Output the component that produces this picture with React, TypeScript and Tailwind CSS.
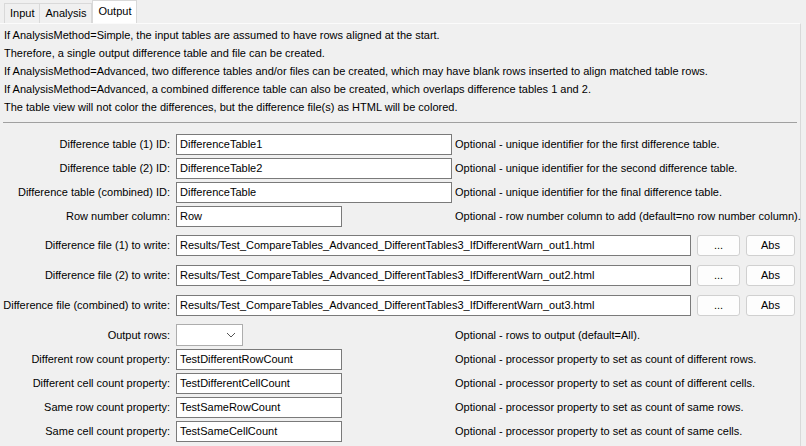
import React from "react";

const F = { fontFamily: '"Segoe UI","Liberation Sans",Arial,sans-serif' };

function Input({ v, w }: { v: string; w: string }) {
  return (
    <div className={`${w} shrink-0 h-[21px] bg-white border border-[#7a7a7a] flex items-center px-[3px] text-[11px] text-black whitespace-nowrap overflow-hidden`}>{v}</div>
  );
}
function Btn({ t, w }: { t: string; w: string }) {
  return (
    <div className={`${w} shrink-0 h-[21px] bg-[#fdfdfd] border border-[#d0d0d0] rounded-[3px] flex items-center justify-center text-[11px] text-black`}>{t}</div>
  );
}
function Row({ label, children, desc, h = "h-[24px]" }: { label: string; children: React.ReactNode; desc?: string; h?: string }) {
  return (
    <div className={`flex items-center ${h}`}>
      <div className="w-[172px] shrink-0 text-right pr-[2px] text-[11px] whitespace-nowrap">{label}</div>
      <div className="w-[4px] shrink-0" />
      {children}
      {desc && <div className="text-[11px] whitespace-nowrap ml-[3px]">{desc}</div>}
    </div>
  );
}

export default function App() {
  const lines = [
    "If AnalysisMethod=Simple, the input tables are assumed to have rows aligned at the start.",
    "Therefore, a single output difference table and file can be created.",
    "If AnalysisMethod=Advanced, two difference tables and/or files can be created, which may have blank rows inserted to align matched table rows.",
    "If AnalysisMethod=Advanced, a combined difference table can also be created, which overlaps difference tables 1 and 2.",
    "The table view will not color the differences, but the difference file(s) as HTML will be colored.",
  ];
  const file = (n: string) => (
    <>
      <Input v={`Results/Test_CompareTables_Advanced_DifferentTables3_IfDifferentWarn_out${n}.html`} w="w-[515px]" />
      <div className="w-[6px] shrink-0" />
      <Btn t="..." w="w-[43px]" />
      <div className="w-[6px] shrink-0" />
      <Btn t="Abs" w="w-[49px]" />
    </>
  );
  return (
    <div style={F} className="w-[806px] h-[446px] bg-[#f0f0f0] text-black relative overflow-hidden">
      <div className="flex h-[23px] pl-[4px] items-end text-[11px]">
        <div className="h-[20px] px-[5px] border border-b-0 border-[#d9d9d9] bg-[#f0f0f0] flex items-center">Input</div>
        <div className="h-[20px] px-[5px] border border-b-0 border-l-0 border-[#d9d9d9] bg-[#f0f0f0] flex items-center">Analysis</div>
        <div className="h-[23px] px-[5px] border border-b-0 border-[#d9d9d9] bg-white flex items-center pb-[2px]">Output</div>
      </div>
      <div className="w-[801px] h-[430px] border-t border-[#fbfbfb] border-r border-r-[#d9d9d9]">
        <div className="pl-[4px] pt-[2px] text-[11px] leading-[18px]">
          {lines.map((l) => (
            <div key={l} className="whitespace-nowrap">{l}</div>
          ))}
        </div>
        <div className="mt-[6px] mx-[3px] border-t border-[#a0a0a0]" />
        <div className="mt-[9px]">
          <Row label="Difference table (1) ID:" desc="Optional - unique identifier for the first difference table.">
            <Input v="DifferenceTable1" w="w-[276px]" />
          </Row>
          <Row label="Difference table (2) ID:" desc="Optional - unique identifier for the second difference table.">
            <Input v="DifferenceTable2" w="w-[276px]" />
          </Row>
          <Row label="Difference table (combined) ID:" desc="Optional - unique identifier for the final difference table.">
            <Input v="DifferenceTable" w="w-[276px]" />
          </Row>
          <Row label="Row number column:">
            <Input v="Row" w="w-[166px]" />
            <div className="w-[113px] shrink-0" />
            <div className="text-[11px] whitespace-nowrap">Optional - row number column to add (default=no row number column).</div>
          </Row>
          <div className="h-[2px]" />
          <Row label="Difference file (1) to write:" h="h-[30px]">{file("1")}</Row>
          <Row label="Difference file (2) to write:" h="h-[30px]">{file("2")}</Row>
          <Row label="Difference file (combined) to write:" h="h-[30px]">{file("3")}</Row>
          <div className="h-[3px]" />
          <Row label="Output rows:">
            <div className="w-[67px] shrink-0 h-[22px] bg-white border border-[#adadad] flex items-center justify-end pr-[6px]">
              <svg width="10" height="6" viewBox="0 0 10 6"><path d="M1 1l4 4 4-4" fill="none" stroke="#555" strokeWidth="1" /></svg>
            </div>
            <div className="w-[212px] shrink-0" />
            <div className="text-[11px] whitespace-nowrap">Optional - rows to output (default=All).</div>
          </Row>
          {[
            ["Different row count property:", "TestDifferentRowCount", "Optional - processor property to set as count of different rows."],
            ["Different cell count property:", "TestDifferentCellCount", "Optional - processor property to set as count of different cells."],
            ["Same row count property:", "TestSameRowCount", "Optional - processor property to set as count of same rows."],
            ["Same cell count property:", "TestSameCellCount", "Optional - processor property to set as count of same cells."],
          ].map(([l, v, d]) => (
            <Row key={l} label={l}>
              <Input v={v} w="w-[166px]" />
              <div className="w-[113px] shrink-0" />
              <div className="text-[11px] whitespace-nowrap">{d}</div>
            </Row>
          ))}
        </div>
      </div>
    </div>
  );
}
